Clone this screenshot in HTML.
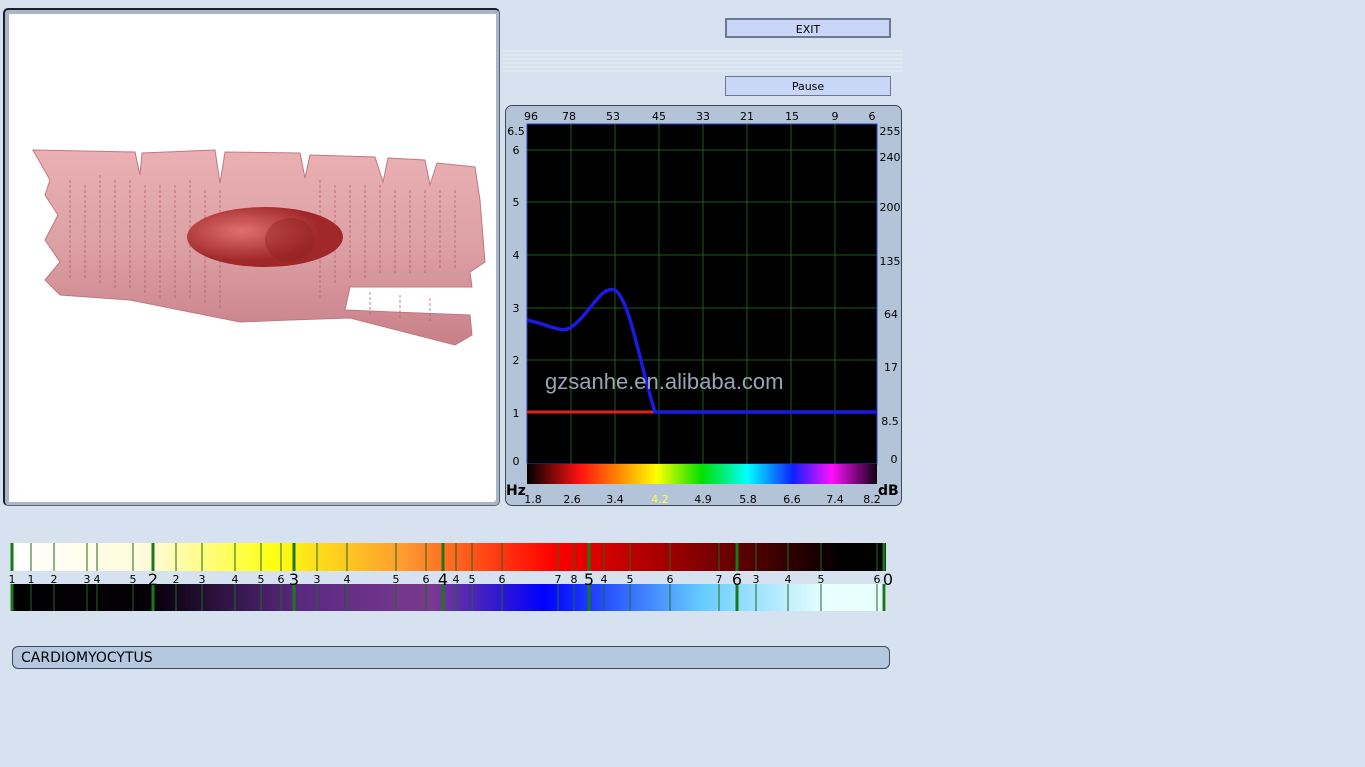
<!DOCTYPE html>
<html><head><meta charset="utf-8"><style>
body{margin:0;width:1365px;height:767px;background:#d6e2f0;font-family:"DejaVu Sans",sans-serif;position:relative;overflow:hidden}
.a{position:absolute}
.btn{position:absolute;left:725px;width:166px;height:20px;background:#c8d6f8;border:1px solid #6a7890;font-size:11px;text-align:center;line-height:20px;box-sizing:border-box}
</style></head><body>
<div class="a" style="left:3px;top:8px;width:497px;height:498px;background:#fff;border-top:2px solid #1a2030;border-left:2px solid #1a2030;border-right:1px solid #5a6478;border-bottom:1px solid #5a6478;border-radius:5px;box-sizing:border-box;box-shadow:inset 2px 2px 0 2px #aab6c6,inset -2px -2px 0 1px #aab6c6"></div>
<svg class="a" style="left:0;top:0" width="500" height="500">
<defs><radialGradient id="n" cx="0.35" cy="0.4"><stop offset="0" stop-color="#e07070"/><stop offset="1" stop-color="#a02828"/></radialGradient>
<linearGradient id="c" x1="0" y1="0" x2="0" y2="1"><stop offset="0" stop-color="#eab0b4"/><stop offset="0.5" stop-color="#dca0a4"/><stop offset="1" stop-color="#c88088"/></linearGradient></defs>
<polygon fill="url(#c)" stroke="#c07880" stroke-width="1" points="33,150 135,152 140,175 142,153 215,150 220,183 225,152 300,153 305,178 310,155 375,157 383,182 388,158 425,160 430,185 437,163 475,167 480,200 485,262 470,272 472,287 350,287 345,310 470,315 472,335 455,345 350,318 290,320 240,322 180,310 130,300 60,295 45,280 60,262 45,240 58,215 45,195 50,180"/>
<g stroke="#b05a6a" stroke-width="2" opacity="0.35" stroke-dasharray="3 2"><path d="M70 180v100M85 185v95M100 175v110M115 180v110M130 180v110M145 185v110M160 185v115M175 185v115M190 180v120M205 190v115M220 190v120M320 180v120M335 185v100M350 185v95M365 185v95M380 185v90M395 190v85M410 190v85M425 190v85M440 190v80M455 190v80M370 292v25M400 295v25M430 298v25"/></g>
<ellipse cx="265" cy="237" rx="78" ry="30" fill="url(#n)"/>
<ellipse cx="290" cy="240" rx="25" ry="22" fill="#902020" opacity="0.4"/>
</svg>
<div class="btn" style="top:18px;border:2px solid #6a7890">EXIT</div>
<div class="a" style="left:503px;top:48px;width:400px;height:26px;background:repeating-linear-gradient(#d6e2f0 0 2px,#e0e8f2 2px 4px)"></div>
<div class="btn" style="top:76px">Pause</div>
<div class="a" style="left:505px;top:105px;width:397px;height:401px;background:#b4c4d8;border:1px solid #404858;border-radius:7px;box-sizing:border-box"></div>
<svg class="a" style="left:505px;top:105px" width="397" height="401" font-size="11" font-family="DejaVu Sans">
<rect x="22" y="19" width="350" height="340" fill="#000" stroke="#3040c0"/>
<g stroke="#1e7a1e" stroke-width="0.8"><path d="M66 19v340M110 19v340M154 19v340M198 19v340M242 19v340M286 19v340M330 19v340M22 307h350M22 255h350M22 203h350M22 150h350M22 97h350M22 45h350"/></g>
<defs><linearGradient id="sp"><stop offset="0" stop-color="#000"/><stop offset="0.15" stop-color="#ff1010"/><stop offset="0.27" stop-color="#ff9000"/><stop offset="0.37" stop-color="#ffff00"/><stop offset="0.5" stop-color="#00e000"/><stop offset="0.63" stop-color="#00ffff"/><stop offset="0.76" stop-color="#1020ff"/><stop offset="0.87" stop-color="#ff10ff"/><stop offset="1" stop-color="#100010"/></linearGradient></defs>
<rect x="22" y="359" width="350" height="20" fill="url(#sp)"/>
<path d="M22 307H150" stroke="#e02020" stroke-width="3"/>
<path d="M22 215C45 220 55 228 65 223C85 210 95 180 110 185C125 195 135 260 150 307H372" fill="none" stroke="#1a1ae0" stroke-width="3.5"/>
<text x="40" y="284" fill="#9aa4b4" font-size="22" font-family="Liberation Sans">gzsanhe.en.alibaba.com</text>
<g text-anchor="middle"><text x="26" y="15">96</text><text x="64" y="15">78</text><text x="108" y="15">53</text><text x="154" y="15">45</text><text x="198" y="15">33</text><text x="242" y="15">21</text><text x="287" y="15">15</text><text x="330" y="15">9</text><text x="367" y="15">6</text>
<text x="28" y="398">1.8</text><text x="67" y="398">2.6</text><text x="110" y="398">3.4</text><text x="155" y="398" fill="#ffff40">4.2</text><text x="198" y="398">4.9</text><text x="243" y="398">5.8</text><text x="287" y="398">6.6</text><text x="330" y="398">7.4</text><text x="367" y="398">8.2</text>
<text x="11" y="312">1</text><text x="11" y="259">2</text><text x="11" y="207">3</text><text x="11" y="154">4</text><text x="11" y="101">5</text><text x="11" y="49">6</text><text x="11" y="360">0</text><text x="11" y="30">6.5</text>
<text x="385" y="30">255</text><text x="385" y="56">240</text><text x="385" y="106">200</text><text x="385" y="160">135</text><text x="386" y="213">64</text><text x="386" y="266">17</text><text x="385" y="320">8.5</text><text x="389" y="358">0</text></g>
<text x="1" y="390" font-weight="bold" font-size="14">Hz</text><text x="373" y="390" font-weight="bold" font-size="14">dB</text>
</svg>
<svg class="a" style="left:0;top:540px" width="900" height="75" font-size="11" font-family="DejaVu Sans">
<defs><linearGradient id="t" gradientUnits="userSpaceOnUse" x1="11" x2="886"><stop offset="0" stop-color="#fff"/><stop offset="0.16" stop-color="#fffbd8"/><stop offset="0.3" stop-color="#ffff10"/><stop offset="0.45" stop-color="#ff9a30"/><stop offset="0.62" stop-color="#ff0000"/><stop offset="0.75" stop-color="#a00000"/><stop offset="0.95" stop-color="#000"/></linearGradient>
<linearGradient id="b" gradientUnits="userSpaceOnUse" x1="11" x2="886"><stop offset="0" stop-color="#000"/><stop offset="0.16" stop-color="#050008"/><stop offset="0.33" stop-color="#5a2880"/><stop offset="0.48" stop-color="#7a3a90"/><stop offset="0.61" stop-color="#0000ff"/><stop offset="0.79" stop-color="#66ccff"/><stop offset="0.93" stop-color="#e8ffff"/></linearGradient></defs>
<rect x="11" y="3" width="875" height="28" fill="url(#t)"/>
<rect x="11" y="44" width="875" height="27" fill="url(#b)"/>
<g stroke="#1e6a1e"><path d="M31 3v28M54 3v28M87 3v28M97 3v28M133 3v28M176 3v28M202 3v28M235 3v28M261 3v28M281 3v28M317 3v28M347 3v28M396 3v28M426 3v28M456 3v28M472 3v28M502 3v28M558 3v28M574 3v28M604 3v28M630 3v28M670 3v28M719 3v28M756 3v28M788 3v28M821 3v28M877 3v28M31 44v27M54 44v27M87 44v27M97 44v27M133 44v27M176 44v27M202 44v27M235 44v27M261 44v27M281 44v27M317 44v27M347 44v27M396 44v27M426 44v27M456 44v27M472 44v27M502 44v27M558 44v27M574 44v27M604 44v27M630 44v27M670 44v27M719 44v27M756 44v27M788 44v27M821 44v27M877 44v27"/></g>
<g stroke="#1a7a1a" stroke-width="3"><path d="M12 3v28M153 3v28M294 3v28M443 3v28M589 3v28M737 3v28M884 3v28M12 44v27M153 44v27M294 44v27M443 44v27M589 44v27M737 44v27M884 44v27"/></g>
<g text-anchor="middle"><text x="12" y="43">1</text><text x="31" y="43">1</text><text x="54" y="43">2</text><text x="87" y="43">3</text><text x="97" y="43">4</text><text x="133" y="43">5</text><text x="153" y="45" font-size="16">2</text><text x="176" y="43">2</text><text x="202" y="43">3</text><text x="235" y="43">4</text><text x="261" y="43">5</text><text x="281" y="43">6</text><text x="294" y="45" font-size="16">3</text><text x="317" y="43">3</text><text x="347" y="43">4</text><text x="396" y="43">5</text><text x="426" y="43">6</text><text x="443" y="45" font-size="16">4</text><text x="456" y="43">4</text><text x="472" y="43">5</text><text x="502" y="43">6</text><text x="558" y="43">7</text><text x="574" y="43">8</text><text x="589" y="45" font-size="16">5</text><text x="604" y="43">4</text><text x="630" y="43">5</text><text x="670" y="43">6</text><text x="719" y="43">7</text><text x="737" y="45" font-size="16">6</text><text x="756" y="43">3</text><text x="788" y="43">4</text><text x="821" y="43">5</text><text x="877" y="43">6</text><text x="888" y="45" font-size="16">0</text></g>
</svg>
<div class="a" style="left:12px;top:646px;width:878px;height:23px;background:#b4c8e0;border:1px solid #404858;border-radius:6px;box-sizing:border-box;font-size:14px;line-height:23px;padding-left:8px">CARDIOMYOCYTUS</div>
</body></html>
